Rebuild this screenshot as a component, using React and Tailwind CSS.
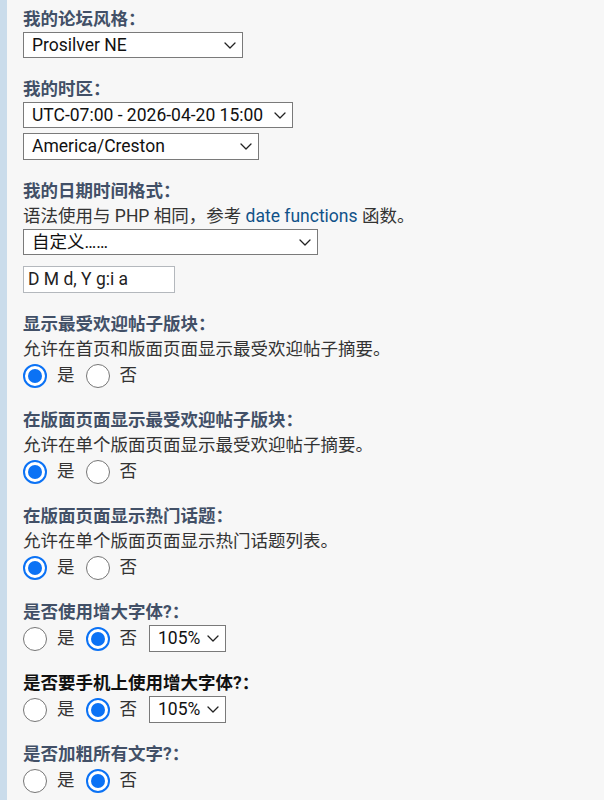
import React from "react";

// 下拉框右侧的小箭头
const Chevron = () => (
  <svg width="12" height="7" viewBox="0 0 12 7" fill="none" aria-hidden="true" className="shrink-0">
    <path d="M1 1l5 5 5-5" stroke="#222" strokeWidth="1.3" strokeLinecap="round" strokeLinejoin="round" />
  </svg>
);

const Select = ({ text, className }) => (
  <div
    className={
      "flex items-center justify-between bg-white border border-[#7a7a7a] pl-[8px] pr-[6px] text-[17.5px] text-[#111] " +
      className
    }
  >
    <span className="whitespace-nowrap">{text}</span>
    <Chevron />
  </div>
);

const Radio = ({ checked, className = "" }) =>
  checked ? (
    <span
      className={
        "w-6 h-6 rounded-full border-2 border-[#0b72f5] bg-white flex items-center justify-center shrink-0 " +
        className
      }
    >
      <span className="w-[14px] h-[14px] rounded-full bg-[#0b72f5]" />
    </span>
  ) : (
    <span className={"block w-6 h-6 rounded-full border-[1.5px] border-[#767676] bg-white shrink-0 " + className} />
  );

const YesNo = ({ yes, children }) => (
  <div className="flex items-center h-[27px] text-[17.5px] text-[#333]">
    <Radio checked={yes} />
    <span className="ml-[10px]">是</span>
    <Radio checked={!yes} className="ml-[11px]" />
    <span className="ml-[10px]">否</span>
    {children}
  </div>
);

const Label = ({ children, dark }) => (
  <div className={"font-bold text-[17.5px] leading-[25px] " + (dark ? "text-[#111]" : "text-[#425067]")}>
    {children}
  </div>
);

const Desc = ({ children }) => (
  <div className="text-[17.5px] leading-[25px] text-[#333]">{children}</div>
);

export default function App() {
  return (
    <div
      className="flex min-h-screen bg-[#f7f7f7]"
      style={{ fontFamily: 'Roboto, "Noto Sans CJK SC", sans-serif' }}
    >
      <div className="w-[7px] shrink-0 bg-[#cadceb]" />
      <div className="flex flex-col gap-[19px] pl-4 pt-[7px] pb-2">
        <section>
          <Label>我的论坛风格：</Label>
          <Select text="Prosilver NE" className="w-[220px] h-[26px]" />
        </section>

        <section>
          <Label>我的时区：</Label>
          <Select text="UTC-07:00 - 2026-04-20 15:00" className="w-[270px] h-[26px]" />
          <Select text="America/Creston" className="w-[236px] h-[27px] mt-[5px]" />
        </section>

        <section>
          <Label>我的日期时间格式：</Label>
          <Desc>
            语法使用与 PHP 相同，参考 <span className="text-[#105289]">date functions</span> 函数。
          </Desc>
          <Select text="自定义……" className="w-[295px] h-[26px]" />
          <div className="mt-[11px] w-[152px] h-[27px] bg-white border border-[#b4b8bd] pl-1 flex items-center text-[17.5px] text-[#222]">
            D M d, Y g:i a
          </div>
        </section>

        <section>
          <Label>显示最受欢迎帖子版块：</Label>
          <Desc>允许在首页和版面页面显示最受欢迎帖子摘要。</Desc>
          <YesNo yes />
        </section>

        <section>
          <Label>在版面页面显示最受欢迎帖子版块：</Label>
          <Desc>允许在单个版面页面显示最受欢迎帖子摘要。</Desc>
          <YesNo yes />
        </section>

        <section>
          <Label>在版面页面显示热门话题：</Label>
          <Desc>允许在单个版面页面显示热门话题列表。</Desc>
          <YesNo yes />
        </section>

        <section>
          <Label>是否使用增大字体?：</Label>
          <YesNo>
            <Select text="105%" className="ml-[12px] w-[77px] h-[27px]" />
          </YesNo>
        </section>

        <section>
          <Label dark>是否要手机上使用增大字体?：</Label>
          <YesNo>
            <Select text="105%" className="ml-[12px] w-[77px] h-[27px]" />
          </YesNo>
        </section>

        <section>
          <Label>是否加粗所有文字?：</Label>
          <YesNo />
        </section>
      </div>
    </div>
  );
}
